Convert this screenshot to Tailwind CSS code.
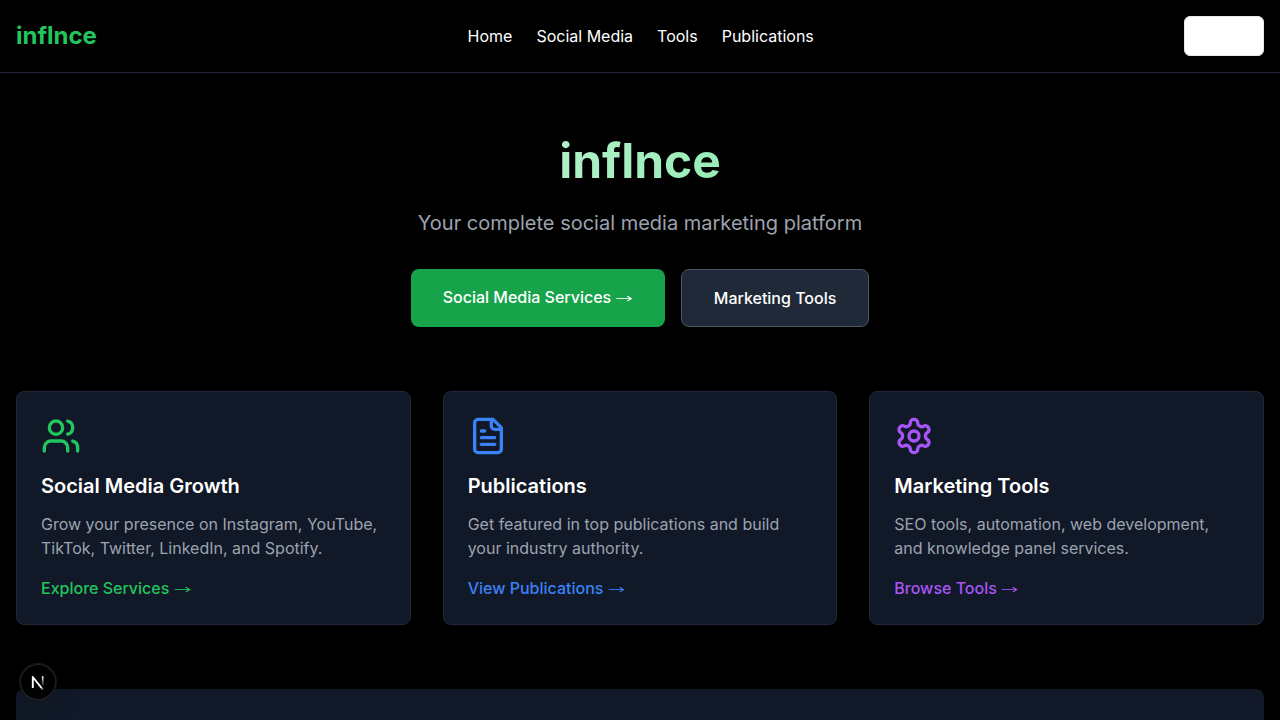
<!DOCTYPE html>
<html lang="en">
<head>
<meta charset="utf-8">
<title>inflnce</title>
<script src="https://cdn.jsdelivr.net/npm/@tailwindcss/browser@4"></script>
</head>
<body class="flex h-screen flex-col overflow-hidden bg-black text-white antialiased font-['Inter','Liberation_Sans',sans-serif]">
<header class="border-b border-[#1f2937]">
  <div class="flex items-center justify-between p-4">
    <a class="text-2xl font-bold text-[#22c55e]">inflnce</a>
    <nav class="flex gap-6 pl-[0.5px]">
      <a>Home</a><a>Social Media</a><a>Tools</a><a>Publications</a>
    </nav>
    <button class="h-10 w-20 rounded-md border border-[#e2e8f0] bg-white" aria-label="Sign in"></button>
  </div>
</header>
<main class="flex min-h-0 flex-1 flex-col px-4 pt-16">
  <section class="mb-16 text-center">
    <h1 class="mb-6 bg-linear-to-r/srgb from-white to-[#4ade80] bg-clip-text text-5xl leading-none font-bold text-transparent">inflnce</h1>
    <p class="mb-8 text-xl text-[#9ca3af]">Your complete social media marketing platform</p>
    <div class="flex justify-center gap-4">
      <a class="rounded-lg bg-[#16a34a] px-8 py-4 font-medium">Social Media Services <span class="inline-block h-4 w-[17.3px] translate-x-[0.5px] translate-y-[2px] scale-x-108 scale-y-70 text-center align-baseline font-['Noto_Sans_CJK_JP'] leading-4 font-normal">→</span></a>
      <a class="rounded-lg border border-[#4b5563] bg-[#1f2937] px-8 py-4 font-medium">Marketing Tools</a>
    </div>
  </section>
  <section class="mb-16 grid shrink-0 grid-cols-3 gap-8">
    <article class="rounded-lg border border-[#1f2937] bg-[#111827] p-6">
      <svg class="mb-4 size-10 text-[#22c55e]" viewBox="0 0 24 24" fill="none" stroke="currentColor" stroke-width="2" stroke-linecap="round" stroke-linejoin="round"><path d="M16 21v-2a4 4 0 0 0-4-4H6a4 4 0 0 0-4 4v2"/><circle cx="9" cy="7" r="4"/><path d="M22 21v-2a4 4 0 0 0-3-3.87"/><path d="M16 3.13a4 4 0 0 1 0 7.75"/></svg>
      <h3 class="mb-3 text-xl font-semibold">Social Media Growth</h3>
      <p class="mb-4 text-[#9ca3af]">Grow your presence on Instagram, YouTube, TikTok, Twitter, LinkedIn, and Spotify.</p>
      <a class="block h-6 font-medium text-[#22c55e]">Explore Services <span class="inline-block h-4 w-[17.3px] translate-y-[2px] scale-x-108 scale-y-70 text-center align-baseline font-['Noto_Sans_CJK_JP'] leading-4 font-normal">→</span></a>
    </article>
    <article class="rounded-lg border border-[#1f2937] bg-[#111827] p-6">
      <svg class="mb-4 size-10 text-[#3b82f6]" viewBox="0 0 24 24" fill="none" stroke="currentColor" stroke-width="2" stroke-linecap="round" stroke-linejoin="round"><path d="M15 2H6a2 2 0 0 0-2 2v16a2 2 0 0 0 2 2h12a2 2 0 0 0 2-2V7Z"/><path d="M14 2v4a2 2 0 0 0 2 2h4"/><path d="M10 9H8"/><path d="M16 13H8"/><path d="M16 17H8"/></svg>
      <h3 class="mb-3 text-xl font-semibold">Publications</h3>
      <p class="mb-4 text-[#9ca3af]">Get featured in top publications and build your industry authority.</p>
      <a class="block h-6 font-medium text-[#3b82f6]">View Publications <span class="inline-block h-4 w-[17.3px] translate-y-[2px] scale-x-108 scale-y-70 text-center align-baseline font-['Noto_Sans_CJK_JP'] leading-4 font-normal">→</span></a>
    </article>
    <article class="rounded-lg border border-[#1f2937] bg-[#111827] p-6">
      <svg class="mb-4 size-10 text-[#a855f7]" viewBox="0 0 24 24" fill="none" stroke="currentColor" stroke-width="2" stroke-linecap="round" stroke-linejoin="round"><path d="M12.22 2h-.44a2 2 0 0 0-2 2v.18a2 2 0 0 1-1 1.73l-.43.25a2 2 0 0 1-2 0l-.15-.08a2 2 0 0 0-2.73.73l-.22.38a2 2 0 0 0 .73 2.73l.15.1a2 2 0 0 1 1 1.72v.51a2 2 0 0 1-1 1.74l-.15.09a2 2 0 0 0-.73 2.73l.22.38a2 2 0 0 0 2.73.73l.15-.08a2 2 0 0 1 2 0l.43.25a2 2 0 0 1 1 1.73V20a2 2 0 0 0 2 2h.44a2 2 0 0 0 2-2v-.18a2 2 0 0 1 1-1.73l.43-.25a2 2 0 0 1 2 0l.15.08a2 2 0 0 0 2.73-.73l.22-.39a2 2 0 0 0-.73-2.73l-.15-.08a2 2 0 0 1-1-1.74v-.5a2 2 0 0 1 1-1.74l.15-.09a2 2 0 0 0 .73-2.73l-.22-.38a2 2 0 0 0-2.73-.73l-.15.08a2 2 0 0 1-2 0l-.43-.25a2 2 0 0 1-1-1.73V4a2 2 0 0 0-2-2z"/><circle cx="12" cy="12" r="3"/></svg>
      <h3 class="mb-3 text-xl font-semibold">Marketing Tools</h3>
      <p class="mb-4 text-[#9ca3af]">SEO tools, automation, web development, and knowledge panel services.</p>
      <a class="block h-6 font-medium text-[#a855f7]">Browse Tools <span class="inline-block h-4 w-[17.3px] translate-y-[2px] scale-x-108 scale-y-70 text-center align-baseline font-['Noto_Sans_CJK_JP'] leading-4 font-normal">→</span></a>
    </article>
  </section>
  <section class="flex-1 rounded-t-lg bg-[#111827]"></section>
</main>
<div class="fixed bottom-5 left-5 flex size-9 items-center justify-center rounded-full bg-black/90 shadow-[0_0_0_1px_#171717,inset_0_0_0_1px_rgba(255,255,255,0.14),0_16px_32px_-8px_rgba(0,0,0,0.24)]">
  <svg class="size-10 shrink-0" viewBox="0 0 40 40" fill="none">
    <defs>
      <linearGradient id="stem" x1="0" y1="14" x2="0" y2="25" gradientUnits="userSpaceOnUse"><stop stop-color="#fff"/><stop offset="1" stop-color="#fff" stop-opacity="0"/></linearGradient>
      <linearGradient id="diag" x1="20" y1="20" x2="26" y2="28" gradientUnits="userSpaceOnUse"><stop stop-color="#fff"/><stop offset="0.6" stop-color="#fff"/><stop offset="1" stop-color="#fff" stop-opacity="0"/></linearGradient>
    </defs>
    <path d="M14.8 26V15L25.2 28" stroke="url(#diag)" stroke-width="1.9" stroke-linejoin="round"/>
    <path d="M24.7 14.2v10" stroke="url(#stem)" stroke-width="1.7"/>
  </svg>
</div>
</body>
</html>
